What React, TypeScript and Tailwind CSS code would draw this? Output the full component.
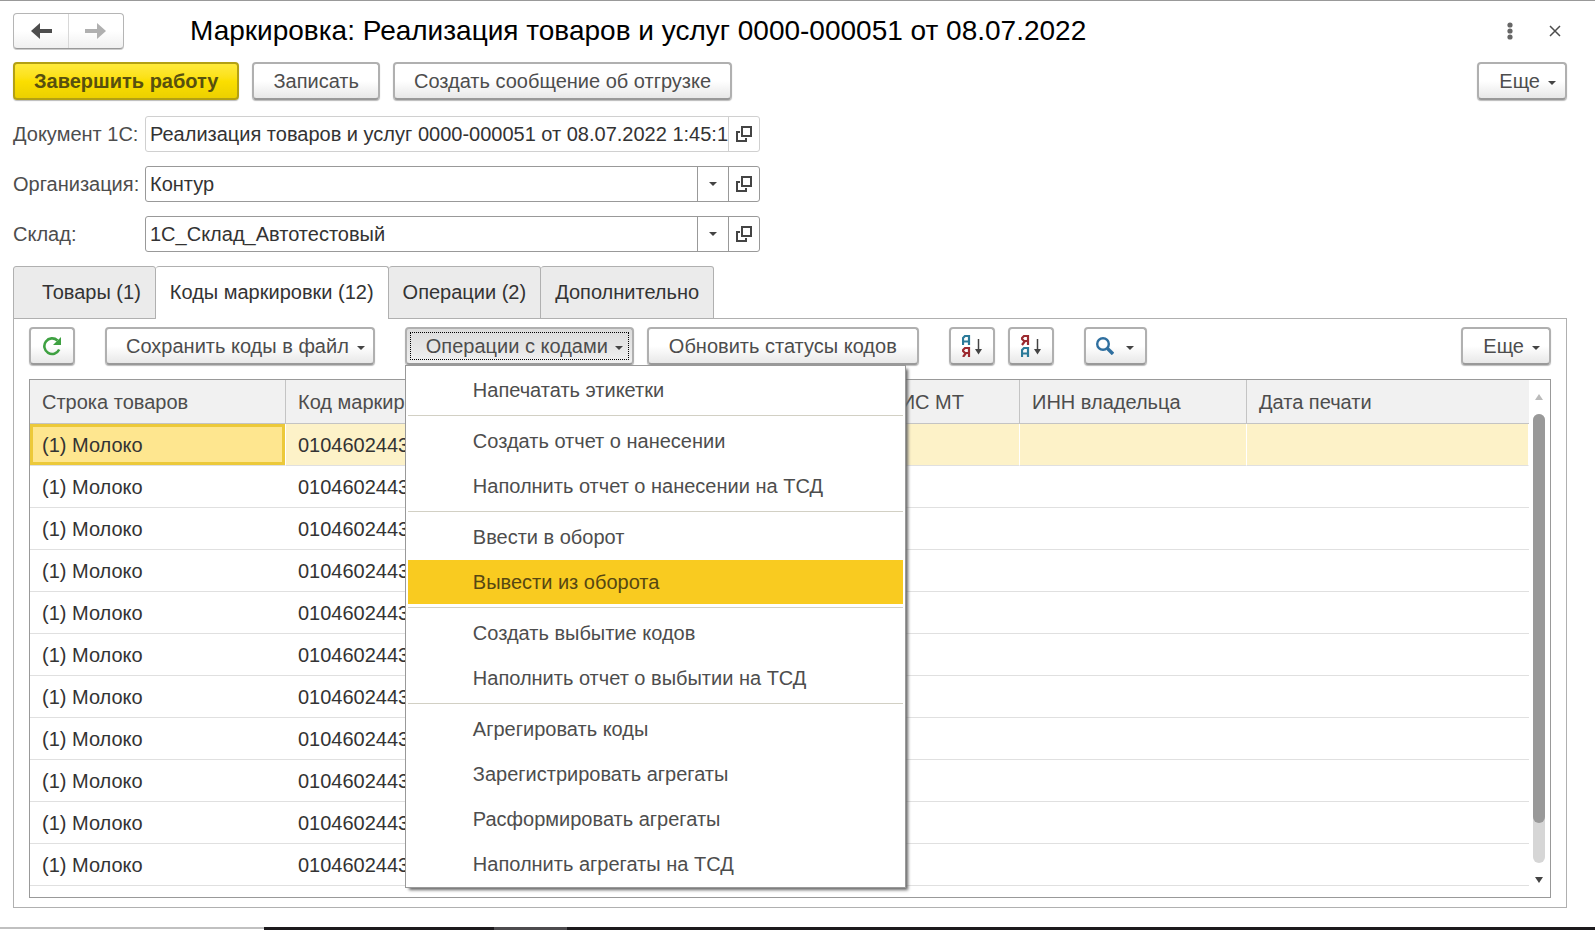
import React from 'react'

const codes = Array.from({ length: 11 }, (_, i) => ({
  id: i,
  line: '(1) Молоко',
  code: '0104602443',
}))

const menuGroups = [
  ['Напечатать этикетки'],
  ['Создать отчет о нанесении', 'Наполнить отчет о нанесении на ТСД'],
  ['Ввести в оборот', 'Вывести из оборота'],
  ['Создать выбытие кодов', 'Наполнить отчет о выбытии на ТСД'],
  [
    'Агрегировать коды',
    'Зарегистрировать агрегаты',
    'Расформировать агрегаты',
    'Наполнить агрегаты на ТСД',
  ],
]

const tabs = ['Товары (1)', 'Коды маркировки (12)', 'Операции (2)', 'Дополнительно']

const buttonBase =
  'flex h-[38px] shrink-0 items-center justify-center rounded border-2 border-[#b0b0b0] border-b-[#999] whitespace-nowrap shadow-[0_1px_1px_#bbb]'
const buttonLight = 'bg-linear-to-b from-white from-50% to-[#e8e8e8]'

function Caret({ className = '' }: { className?: string }) {
  return (
    <svg className={`h-1 w-2 ${className}`} viewBox="0 0 8 4" fill="#444">
      <path d="M0 0h8L4 4z" />
    </svg>
  )
}

function OpenIcon() {
  return (
    <svg className="h-4 w-4" viewBox="0 0 16 16" fill="none" stroke="#444" strokeWidth="2">
      <path d="M6 1h9v9H6z" />
      <path d="M4 6H1v9h9v-3" />
    </svg>
  )
}

function Button({ children, className = '', ...rest }: any) {
  return (
    <button type="button" className={`${buttonBase} ${buttonLight} ${className}`} {...rest}>
      {children}
    </button>
  )
}

function Field({ id, label, value, readOnly, select }: any) {
  const border = readOnly ? 'border-[#d0d0d0]' : 'border-[#999]'
  return (
    <div className="flex items-center">
      <label htmlFor={id} className="w-[132px] shrink-0 whitespace-nowrap">
        {label}
      </label>
      <div className={`flex h-9 w-[615px] overflow-hidden rounded-[3px] border ${border}`}>
        <input
          id={id}
          defaultValue={value}
          readOnly={readOnly}
          className="min-w-0 flex-1 pl-1 text-[#333] outline-none"
        />
        {select && (
          <button
            type="button"
            aria-label="Выбрать"
            className={`flex w-[31px] items-center justify-center border-l ${border}`}
          >
            <Caret />
          </button>
        )}
        <button
          type="button"
          aria-label="Открыть"
          className={`flex w-[31px] items-center justify-center border-l ${border}`}
        >
          <OpenIcon />
        </button>
      </div>
    </div>
  )
}

function SortIcon({ desc }: { desc?: boolean }) {
  const a = 'M1 10V3L3 1H7V10M1 6.500H7'
  const ya = 'M7 10V1H3L1 3V4L3 6H7M4 6L1 10'
  return (
    <svg className="h-[22px] w-5" viewBox="0 0 20 22" fill="none" strokeWidth="2.200">
      <path d={desc ? ya : a} stroke={desc ? '#9c2a30' : '#2b7a99'} />
      <path d={desc ? a : ya} stroke={desc ? '#2b7a99' : '#9c2a30'} transform="translate(0 12)" />
      <path d="M16.500 4v12" stroke="#444" strokeWidth="1.500" />
      <path d="M13 14h7l-3.500 5.500z" fill="#444" />
    </svg>
  )
}

function OperationsMenu() {
  return (
    <div
      role="menu"
      className="absolute top-[38px] left-0 z-10 w-[501px] border border-[#999] bg-white p-[2px] pb-0 shadow-[3px_3px_3px_-1px_#666]"
    >
      {menuGroups.map((group, i) => (
        <div key={i} className={i > 0 ? 'mt-[3px] border-t border-[#d2d0c4] pt-[3px]' : ''}>
          {group.map((item) => (
            <button
              key={item}
              type="button"
              role="menuitem"
              className={`mb-px flex h-11 w-full items-center pl-[65px] text-left ${
                item === 'Вывести из оборота' ? 'bg-[#f9cb20] text-[#564712]' : ''
              }`}
            >
              {item}
            </button>
          ))}
        </div>
      ))}
    </div>
  )
}

function Toolbar() {
  return (
    <div className="flex items-center">
      <Button className="w-[46px]" aria-label="Обновить">
        <svg className="h-5 w-5" viewBox="0 0 20 20" fill="none">
          <path d="M15.500 4.500A7.800 7.800 0 1 0 17.200 13.500" stroke="#3fa142" strokeWidth="2.600" />
          <path d="M19 1v8h-8z" fill="#3fa142" />
        </svg>
      </Button>
      <Button className="ml-[30px] gap-2 pr-2 pl-[19px]">
        Сохранить коды в файл <Caret className="mt-1" />
      </Button>
      <div className="relative ml-[30px]">
        <button
          type="button"
          aria-haspopup="menu"
          aria-expanded="true"
          className={`${buttonBase} bg-linear-to-b from-[#dcdcdc] to-[#f0f0f0] px-[3px]`}
        >
          <span className="flex h-7 items-center gap-[7px] border border-dotted border-black pr-[5px] pl-[15px]">
            Операции с кодами <Caret className="mt-1" />
          </span>
        </button>
        <OperationsMenu />
      </div>
      <Button className="ml-[13px] px-5">Обновить статусы кодов</Button>
      <Button className="ml-[30px] w-[46px]" aria-label="Сортировать по возрастанию">
        <SortIcon />
      </Button>
      <Button className="ml-[13px] w-[46px]" aria-label="Сортировать по убыванию">
        <SortIcon desc />
      </Button>
      <Button className="ml-[30px] w-[63px] gap-3" aria-label="Найти">
        <svg className="h-[18px] w-[18px]" viewBox="0 0 18 18" fill="none" stroke="#2f6f9f">
          <circle cx="7" cy="7" r="5.800" strokeWidth="2.400" />
          <path d="M11.500 11.500l5.500 5.500" strokeWidth="3.400" />
        </svg>
        <Caret className="mt-1" />
      </Button>
      <Button className="ml-auto gap-2 pr-[9px] pl-5">
        Еще <Caret className="mt-1" />
      </Button>
    </div>
  )
}

function CodesTable() {
  const th = 'border-r border-b border-[#c4c4c4] px-3 text-left font-normal whitespace-nowrap'
  return (
    <div className="mt-[14px] flex h-[519px] border border-[#999]">
      <div className="min-w-0 flex-1">
        <table className="w-full table-fixed border-separate border-spacing-0">
          <colgroup>
            <col className="w-[256px]" />
            <col className="w-[507px]" />
            <col className="w-[227px]" />
            <col className="w-[227px]" />
            <col />
          </colgroup>
          <thead>
            <tr className="h-11 bg-[#f1f1f1]">
              <th className={th}>Строка товаров</th>
              <th className={th}>Код маркировки</th>
              <th className={`${th} text-right`}>
                <span className="mr-[43px]">Статус ГИС МТ</span>
              </th>
              <th className={th}>ИНН владельца</th>
              <th className={`${th} border-r-0`}>Дата печати</th>
            </tr>
          </thead>
          <tbody className="text-[#333]">
            {codes.map((row, i) => {
              const selected = i === 0
              const td = `border-b border-[#e0e0e0] px-3 ${
                selected ? 'border-r border-r-white bg-[#fdf2c8]' : ''
              }`
              return (
                <tr key={row.id} className="h-[42px]">
                  <td
                    className={
                      selected
                        ? 'border-r border-b border-[#e0e0e0] border-r-white bg-[#fee68f] px-3 shadow-[inset_0_0_0_3px_#ecc93a]'
                        : td
                    }
                  >
                    {row.line}
                  </td>
                  <td className={td}>{row.code}</td>
                  <td className={td}></td>
                  <td className={td}></td>
                  <td className={td}></td>
                </tr>
              )
            })}
          </tbody>
        </table>
      </div>
      <div className="flex w-[21px] flex-col items-center py-[14px] pr-[2px]">
        <svg className="h-[6px] w-2" viewBox="0 0 8 6" fill="#bbb">
          <path d="M0 6h8L4 0z" />
        </svg>
        <div className="my-[14px] w-3 flex-1 rounded-full bg-[#d6d6d6]">
          <div className="h-[91%] rounded-full bg-[#999]"></div>
        </div>
        <svg className="h-[6px] w-2" viewBox="0 0 8 6" fill="#444">
          <path d="M0 0h8L4 6z" />
        </svg>
      </div>
    </div>
  )
}

function App() {
  return (
    <div className="flex min-h-screen flex-col border-t border-[#999] bg-white font-['Liberation_Sans',Arial,sans-serif] text-[20px] leading-6 text-[#4d4d4d]">
      <main className="flex-1 pt-3 pr-7 pl-[13px]">
        <header className="flex h-9 items-center">
          <div className="flex h-9 w-[111px] rounded border border-[#b5b5b5] border-b-[#999] bg-linear-to-b from-white from-50% to-[#f0f0f0] shadow-[0_1px_0_#ccc]">
            <button
              type="button"
              aria-label="Назад"
              className="flex flex-1 items-center justify-center border-r border-[#d8d8d8]"
            >
              <svg className="h-4 w-[22px]" viewBox="0 0 22 16" fill="#4d4d4d">
                <path d="M1 8l9-8v6h12v4H10v6z" />
              </svg>
            </button>
            <button
              type="button"
              aria-label="Вперед"
              className="flex flex-1 items-center justify-center"
            >
              <svg className="h-4 w-[22px]" viewBox="0 0 22 16" fill="#b0b0b0">
                <path d="M21 8l-9-8v6H0v4h12v6z" />
              </svg>
            </button>
          </div>
          <h1 className="ml-[66px] text-[28px] leading-9 whitespace-nowrap text-black">
            Маркировка: Реализация товаров и услуг 0000-000051 от 08.07.2022
          </h1>
          <div className="ml-auto flex items-center gap-9 pr-[6px]">
            <button type="button" aria-label="Меню">
              <svg className="h-[18px] w-[6px]" viewBox="0 0 6 18" fill="#666">
                <circle cx="3" cy="3" r="2.600" />
                <circle cx="3" cy="9" r="2.600" />
                <circle cx="3" cy="15" r="2.600" />
              </svg>
            </button>
            <button type="button" aria-label="Закрыть">
              <svg className="h-3 w-3" viewBox="0 0 12 12" stroke="#4d4d4d" strokeWidth="1.500">
                <path d="M1 1l10 10M11 1L1 11" />
              </svg>
            </button>
          </div>
        </header>

        <div className="mt-[13px] flex gap-[13px]">
          <button
            type="button"
            className="flex h-[38px] items-center rounded border-2 border-[#b3a014] bg-linear-to-b from-[#ffea3a] via-[#fbdf00] to-[#ecd000] px-[19px] font-bold whitespace-nowrap text-[#57500f] shadow-[0_1px_1px_#bbb]"
          >
            Завершить работу
          </button>
          <Button className="px-[19px]">Записать</Button>
          <Button className="px-[19px]">Создать сообщение об отгрузке</Button>
          <Button className="ml-auto gap-2 pr-[9px] pl-5">
            Еще <Caret className="mt-1" />
          </Button>
        </div>

        <div className="mt-4 flex flex-col gap-[14px]">
          <Field
            id="doc"
            label="Документ 1С:"
            value="Реализация товаров и услуг 0000-000051 от 08.07.2022 1:45:1"
            readOnly
          />
          <Field id="org" label="Организация:" value="Контур" select />
          <Field id="store" label="Склад:" value="1С_Склад_Автотестовый" select />
        </div>

        <div role="tablist" className="mt-[14px] flex">
          {tabs.map((tab, i) => (
            <button
              key={tab}
              type="button"
              role="tab"
              aria-selected={i === 1}
              className={`relative -mb-px h-[53px] rounded-t-[3px] border-t border-r border-[#b0b0b0] pr-[14px] pb-[2px] text-[#333] ${
                i === 1 ? 'bg-white' : 'border-b bg-[#ebebeb]'
              } ${i === 0 ? 'border-l pl-7' : 'pl-[14px]'}`}
            >
              {tab}
            </button>
          ))}
        </div>
        <section className="border border-[#b0b0b0] px-[15px] pt-2 pb-[9px]">
          <Toolbar />
          <CodesTable />
        </section>
      </main>
      <footer className="flex h-[3px]">
        <div className="w-[264px] border-t-2 border-[#c0c0c0]"></div>
        <div className="w-[230px] bg-[#1c1a1d]"></div>
        <div className="w-[73px] bg-[#4d4b4e]"></div>
        <div className="flex-1 bg-[#1c1a1d]"></div>
      </footer>
    </div>
  )
}

export default App
